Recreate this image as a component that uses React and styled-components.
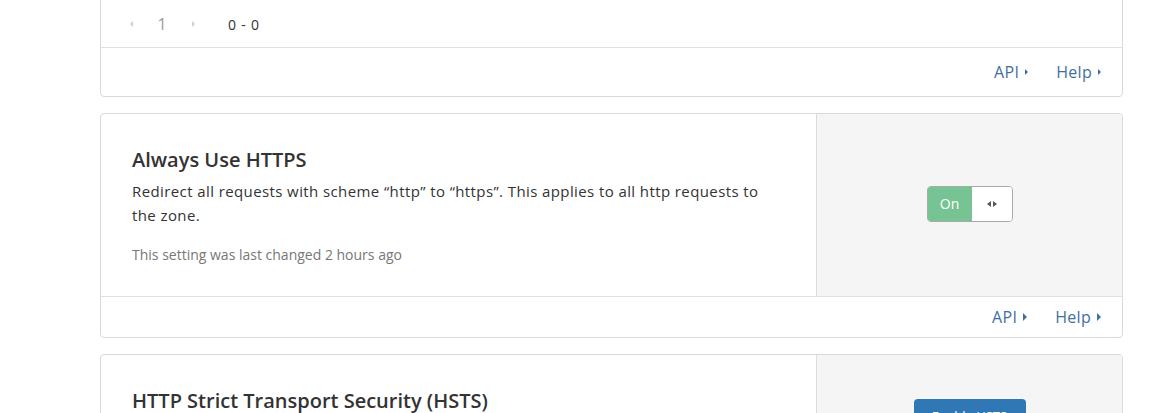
import React from 'react';
import styled, { createGlobalStyle } from 'styled-components';

const GlobalStyle = createGlobalStyle`
  body {
    margin: 0;
    background: #fff;
    font-family: 'Open Sans', 'Noto Sans CJK KR', sans-serif;
    color: #333;
  }
`;

const Page = styled.main`
  padding: 0 43px 0 100px;
  margin-top: -32px;
  display: flex;
  flex-direction: column;
  gap: 16px;
`;

const Card = styled.section`
  border: 1px solid #d9d9d9;
  border-radius: 4px;
  background: #fff;
  overflow: hidden;
`;

const CardBody = styled.div`
  display: flex;
  border-bottom: 1px solid #e0e0e0;
`;

const Content = styled.div`
  flex: 1;
  padding: 32px 32px 31px 31px;
`;

const Side = styled.aside`
  width: 305px;
  background: #f5f5f5;
  border-left: 1px solid #dcdcdc;
  display: flex;
  justify-content: center;
  align-items: ${p => p.align || 'center'};
  padding-top: ${p => p.padTop || 0}px;
`;

const Title = styled.h3`
  margin: 0 0 5px;
  font-size: 20px;
  line-height: 28px;
  font-weight: 600;
  color: #333;
`;

const Description = styled.p`
  margin: 0;
  font-size: 15px;
  line-height: 24px;
  letter-spacing: 0.4px;
  color: #333;
`;

const Changed = styled.p`
  margin: 18px 0 0;
  font-size: 14px;
  line-height: 20px;
  color: #777;
`;

const Pager = styled.div`
  display: flex;
  align-items: center;
  height: 79px;
  padding: 32px 0 0 15px;
  box-sizing: border-box;
  border-bottom: 1px solid #e0e0e0;
`;

const PagerArrow = styled.span`
  width: 30px;
  display: flex;
  justify-content: center;
  &::before {
    content: '';
    border-top: 3px solid transparent;
    border-bottom: 3px solid transparent;
    ${p => (p.dir === 'left' ? 'border-right' : 'border-left')}: 3px solid #d0d0d0;
  }
`;

const PagerPage = styled.span`
  width: 32px;
  text-align: center;
  color: #9a9a9a;
  font-size: 16px;
`;

const PagerRange = styled.span`
  color: #333;
  font-size: 14px;
  margin-left: 20px;
  letter-spacing: 0.8px;
`;

const Footer = styled.footer`
  display: flex;
  justify-content: flex-end;
  align-items: center;
  gap: 28px;
  height: ${p => p.h || 40}px;
  padding-right: 21px;
`;

const FooterLink = styled.a`
  display: inline-flex;
  align-items: center;
  gap: 6px;
  color: #41709f;
  font-size: 16px;
  letter-spacing: 0.3px;
  text-decoration: none;
  cursor: pointer;
`;

const Caret = styled.span`
  width: 0;
  height: 0;
  border-top: ${p => p.s}px solid transparent;
  border-bottom: ${p => p.s}px solid transparent;
  border-left: ${p => p.s}px solid #41709f;
`;

const Toggle = styled.div`
  display: flex;
  width: 86px;
  height: 36px;
  margin-top: -3px;
  border: 1px solid #a9a9a9;
  border-radius: 4px;
  overflow: hidden;
  box-sizing: border-box;
`;

const ToggleOn = styled.span`
  width: 44px;
  background: #76c493;
  color: #fff;
  font-size: 14px;
  display: flex;
  align-items: center;
  justify-content: center;
`;

const ToggleHandle = styled.span`
  flex: 1;
  background: #fff;
  display: flex;
  align-items: center;
  justify-content: center;
  gap: 2px;
`;

const Tri = styled.span`
  width: 0;
  height: 0;
  border-top: 3.5px solid transparent;
  border-bottom: 3.5px solid transparent;
  ${p => (p.dir === 'left' ? 'border-right' : 'border-left')}: 4px solid #555;
`;

const Button = styled.button`
  background: #2f78b5;
  color: #fff;
  border: 0;
  border-radius: 4px;
  width: 112px;
  height: 34px;
  font-family: inherit;
  font-size: 13px;
`;

const Links = ({ s = 3, h }) => (
  <Footer h={h}>
    <FooterLink>API <Caret s={s} /></FooterLink>
    <FooterLink>Help <Caret s={s} /></FooterLink>
  </Footer>
);

export default function App() {
  return (
    <>
      <GlobalStyle />
      <Page>
        <Card>
          <Pager>
            <PagerArrow dir="left" />
            <PagerPage>1</PagerPage>
            <PagerArrow dir="right" />
            <PagerRange>0 - 0</PagerRange>
          </Pager>
          <Links h={48} />
        </Card>
        <Card>
          <CardBody>
            <Content>
              <Title>Always Use HTTPS</Title>
              <Description>
                Redirect all requests with scheme “http” to “https”. This applies to all http requests to the zone.
              </Description>
              <Changed>This setting was last changed 2 hours ago</Changed>
            </Content>
            <Side>
              <Toggle>
                <ToggleOn>On</ToggleOn>
                <ToggleHandle>
                  <Tri dir="left" />
                  <Tri dir="right" />
                </ToggleHandle>
              </Toggle>
            </Side>
          </CardBody>
          <Links s={4} h={40} />
        </Card>
        <Card>
          <CardBody>
            <Content>
              <Title>HTTP Strict Transport Security (HSTS)</Title>
              <Description>
                Enforce web security policy for your website.
              </Description>
              <Changed>This setting was last changed 2 hours ago</Changed>
            </Content>
            <Side align="flex-start" padTop={44}>
              <Button>Enable HSTS</Button>
            </Side>
          </CardBody>
        </Card>
      </Page>
    </>
  );
}
